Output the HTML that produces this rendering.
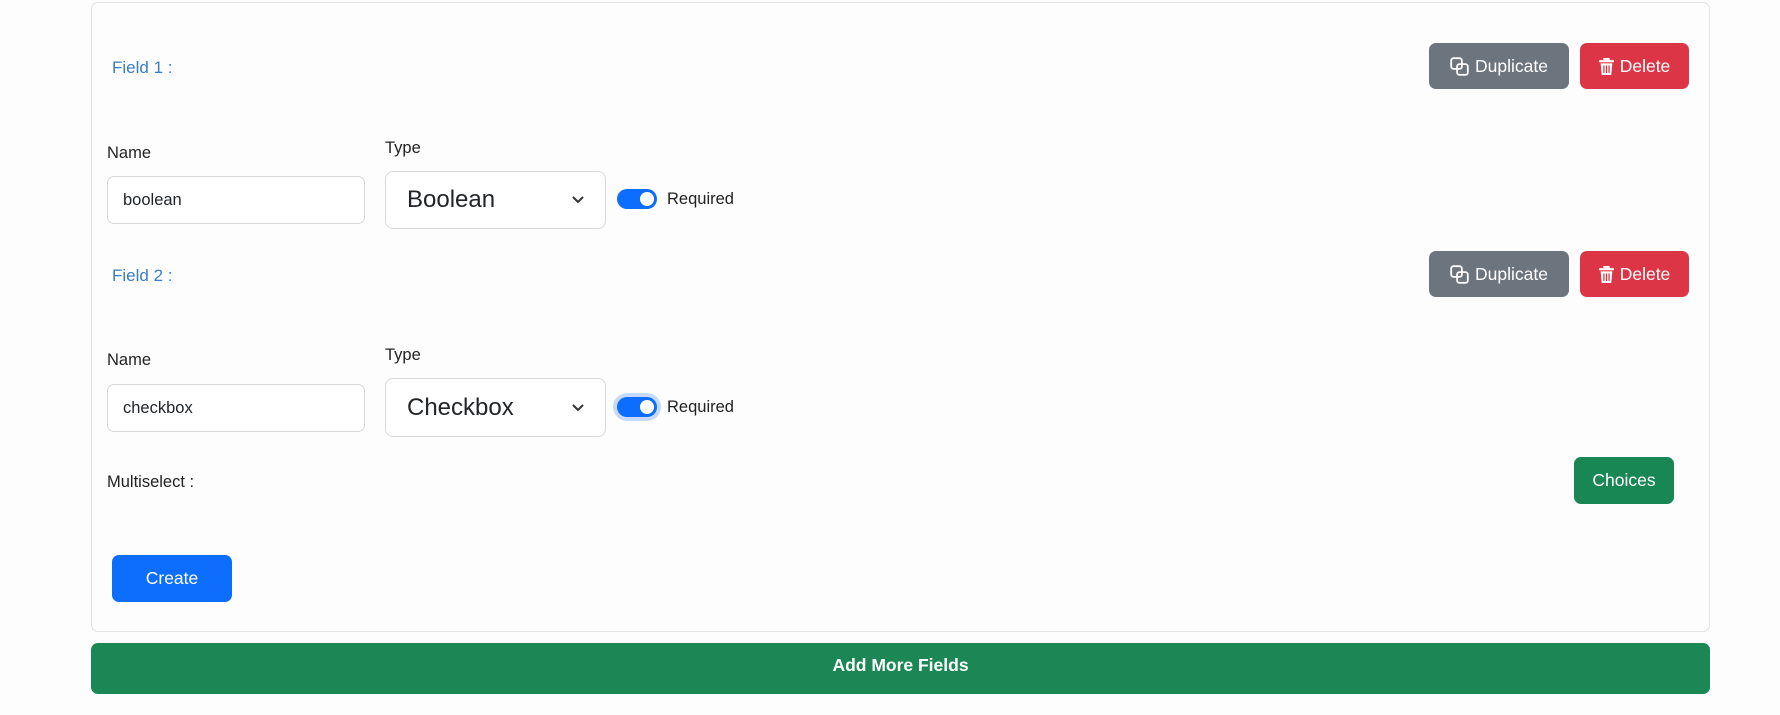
<!DOCTYPE html>
<html><head><meta charset="utf-8"><style>
*{box-sizing:border-box;margin:0;padding:0}
body{width:1780px;height:715px;background:#fdfdfd;font-family:"Liberation Sans",sans-serif;position:relative;overflow:hidden;color:#212529}
.abs{position:absolute}
.card{left:91px;top:2px;width:1619px;height:630px;border:1px solid #e3e3e3;border-radius:7px;background:#fdfdfd}
.fl{color:#3b7dc8;font-size:17px}
.lbl{font-size:16.5px;color:#222}
.inp{border:1px solid #d6d9dc;border-radius:7px;background:#fff;font-size:16.5px;padding-left:15px;display:flex;align-items:center}
.sel{border:1px solid #d6d9dc;border-radius:8px;background:#fff;font-size:24px;padding-left:21px;display:flex;align-items:center}
.chev{position:absolute;right:20px;top:50%;margin-top:-5px}
.tog{width:40px;height:20px;border-radius:10px;background:#0d6efd}
.tog::after{content:"";position:absolute;right:3px;top:3px;width:14px;height:14px;border-radius:50%;background:#fff}
.btn{border-radius:7px;color:#fff;font-size:17.5px;display:flex;align-items:center;justify-content:center;gap:6px}
.dup{background:#6c757d;width:140px;height:46px;left:1429px}
.del{background:#dc3545;width:109px;height:46px;left:1580px}
</style></head><body>
<div class="abs card"></div>

<div class="abs fl" style="left:112px;top:58px">Field 1 :</div>
<div class="abs btn dup" style="top:43px"><svg width="19" height="19" viewBox="0 0 16 16" fill="none" stroke="#fff" stroke-width="1.5"><rect x="1" y="1" width="9" height="9" rx="2"/><rect x="6" y="6" width="9" height="9" rx="2"/></svg>Duplicate</div>
<div class="abs btn del" style="top:43px"><svg width="15" height="17" viewBox="0 0 14 16" fill="#fff"><rect x="0" y="2" width="14" height="2"/><rect x="4" y="0" width="6" height="2"/><path d="M1.5 5h11l-1 11h-9z"/><rect x="4" y="7" width="1.2" height="7" fill="#dc3545"/><rect x="6.4" y="7" width="1.2" height="7" fill="#dc3545"/><rect x="8.8" y="7" width="1.2" height="7" fill="#dc3545"/></svg>Delete</div>

<div class="abs lbl" style="left:107px;top:144px">Name</div>
<div class="abs inp" style="left:107px;top:176px;width:258px;height:48px">boolean</div>
<div class="abs lbl" style="left:385px;top:139px">Type</div>
<div class="abs sel" style="left:385px;top:171px;width:221px;height:58px">Boolean<svg class="chev" width="14" height="10" viewBox="0 0 14 10"><path d="M2 2l5 5 5-5" stroke="#333" stroke-width="2" fill="none"/></svg></div>
<div class="abs tog" style="left:617px;top:189px"></div>
<div class="abs lbl" style="left:667px;top:190px">Required</div>

<div class="abs fl" style="left:112px;top:266px">Field 2 :</div>
<div class="abs btn dup" style="top:251px"><svg width="19" height="19" viewBox="0 0 16 16" fill="none" stroke="#fff" stroke-width="1.5"><rect x="1" y="1" width="9" height="9" rx="2"/><rect x="6" y="6" width="9" height="9" rx="2"/></svg>Duplicate</div>
<div class="abs btn del" style="top:251px"><svg width="15" height="17" viewBox="0 0 14 16" fill="#fff"><rect x="0" y="2" width="14" height="2"/><rect x="4" y="0" width="6" height="2"/><path d="M1.5 5h11l-1 11h-9z"/><rect x="4" y="7" width="1.2" height="7" fill="#dc3545"/><rect x="6.4" y="7" width="1.2" height="7" fill="#dc3545"/><rect x="8.8" y="7" width="1.2" height="7" fill="#dc3545"/></svg>Delete</div>

<div class="abs lbl" style="left:107px;top:351px">Name</div>
<div class="abs inp" style="left:107px;top:384px;width:258px;height:48px">checkbox</div>
<div class="abs lbl" style="left:385px;top:346px">Type</div>
<div class="abs sel" style="left:385px;top:378px;width:221px;height:59px">Checkbox<svg class="chev" width="14" height="10" viewBox="0 0 14 10"><path d="M2 2l5 5 5-5" stroke="#333" stroke-width="2" fill="none"/></svg></div>
<div class="abs tog" style="left:617px;top:397px;box-shadow:0 0 0 4px #c5dafc"></div>
<div class="abs lbl" style="left:667px;top:398px">Required</div>

<div class="abs lbl" style="left:107px;top:473px">Multiselect :</div>
<div class="abs btn" style="left:1574px;top:457px;width:100px;height:47px;background:#198754">Choices</div>

<div class="abs btn" style="left:112px;top:555px;width:120px;height:47px;background:#0d6efd">Create</div>

<div class="abs btn" style="left:91px;top:643px;width:1619px;height:51px;background:#1a8754;font-weight:bold;padding-bottom:6px">Add More Fields</div>
</body></html>
